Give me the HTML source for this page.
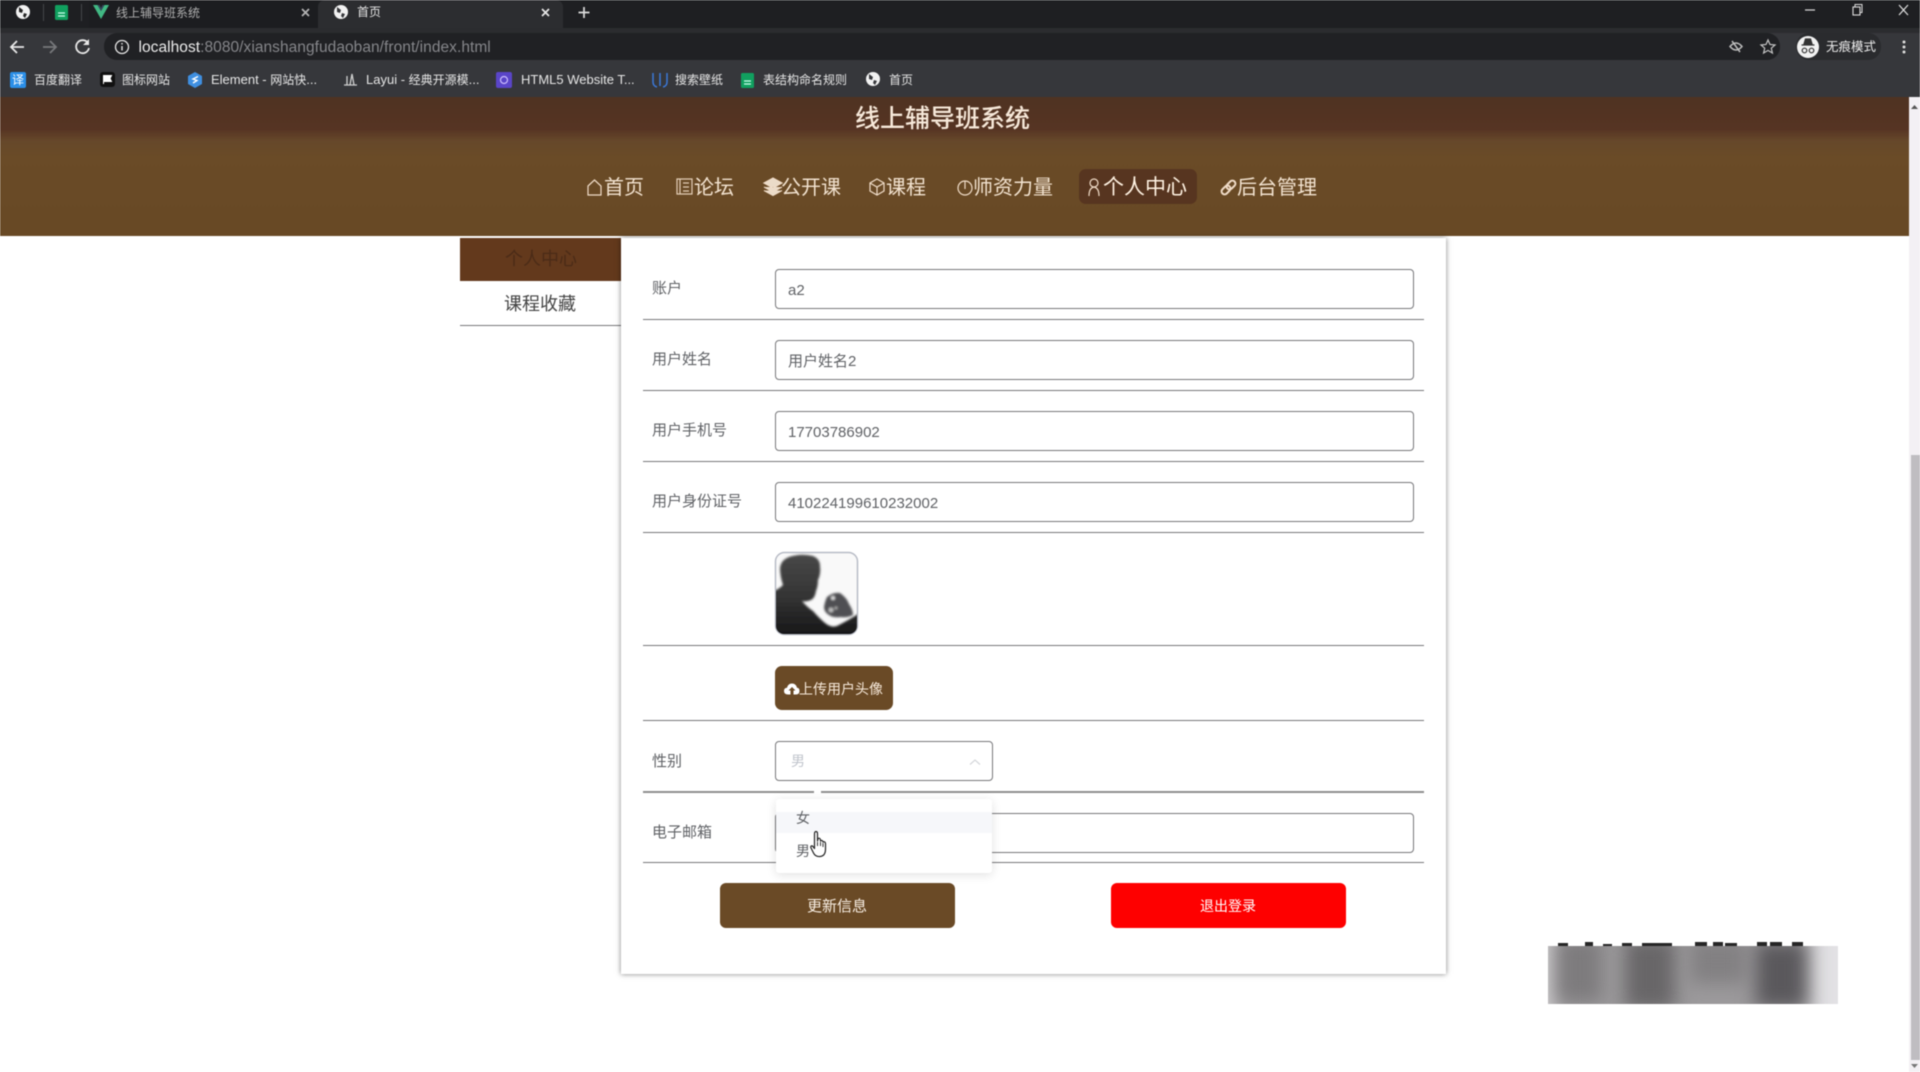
<!DOCTYPE html>
<html lang="zh"><head><meta charset="utf-8"><title>首页</title>
<style>
*{box-sizing:border-box}
html,body{margin:0;padding:0;width:1920px;height:1072px;overflow:hidden;background:#fff;font-family:"Liberation Sans","Noto Sans CJK SC",sans-serif}
#w{position:absolute;left:0;top:0;width:1920px;height:1072px;overflow:hidden;background:#fff;filter:blur(.4px)}
.a{position:absolute}
.t{position:absolute;white-space:nowrap;line-height:1}
.line{position:absolute;left:643px;width:781px;height:1px;background:#77777a}
.lab{position:absolute;left:652px;font-size:15px;line-height:20px;color:#606266;white-space:nowrap}
.inp{position:absolute;left:775px;width:639px;height:40px;border:1px solid #77777a;border-radius:4px;background:#fff;padding-left:12px;font-size:15px;line-height:41px;color:#606266;white-space:nowrap}
.nav{position:absolute;top:177px;font-size:20px;line-height:22px;color:#f3e3d0;white-space:nowrap}
.bm{position:absolute;top:73px;font-size:12px;line-height:14px;color:#e6e6e6;white-space:nowrap}
.bm span{font-size:13px}
svg{position:absolute;overflow:visible}
</style></head><body><div id="w">

<!-- browser chrome -->
<div class="a" style="left:0;top:0;width:1920px;height:29px;background:#1e1f22"></div>
<div class="a" style="left:89px;top:0;width:229px;height:28px;background:#1c1d20"></div>
<div class="a" style="left:318px;top:0;width:245px;height:29px;background:#2c2d30;border-radius:7px 7px 0 0"></div>
<div class="a" style="left:0;top:28px;width:1920px;height:69px;background:#36373b"></div>
<div class="a" style="left:0;top:28px;width:1920px;height:5px;background:#2b2c2f"></div>
<div class="a" style="left:104px;top:33px;width:1676px;height:27px;background:#202124;border-radius:13px"></div>
<div class="a" style="left:1796px;top:33px;width:85px;height:27px;background:#2a2b2e;border-radius:13px"></div>

<svg style="left:0;top:0" width="1920" height="97" viewBox="0 0 1920 97" fill="none">
  <circle cx="23" cy="12" r="7" fill="#f2f2f2"/><path d="M19 7l4 3-1 3-3-1zM24 13l3 1-2 4-2-2z" fill="#222"/>
  <rect x="81" y="4" width="1" height="17" fill="#44464a"/>
  <rect x="43" y="4" width="1" height="17" fill="#44464a"/>
  <rect x="55" y="5" width="13" height="15" rx="1.500" fill="#11a05f"/><path d="M58 13h7M58 16h7" stroke="#cfe" stroke-width="1.200"/>
  <path d="M93 5h4.500l3.500 6 3.500-6h4.500l-8 14z" fill="#41b883"/><path d="M97.500 5h2l1.500 3 1.500-3h2l-3.500 6z" fill="#35495e"/>
  <path d="M302 9l7 7M309 9l-7 7" stroke="#b5b5b5" stroke-width="1.700"/>
  <path d="M542 9l7 7M549 9l-7 7" stroke="#e8e8e8" stroke-width="1.700"/>
  <circle cx="341" cy="12" r="7" fill="#f2f2f2"/><path d="M337 7l4 3-1 3-3-1zM342 13l3 1-2 4-2-2z" fill="#35363a"/>
  <path d="M584 7v11M578.500 12.500h11" stroke="#dcdcdc" stroke-width="1.700"/>
  <path d="M24 47H11M17 41l-6 6 6 6" stroke="#e8e8e8" stroke-width="1.800"/>
  <path d="M43 47h13M50 41l6 6-6 6" stroke="#77787b" stroke-width="1.800"/>
  <path d="M88 43a6.500 6.500 0 1 0 1 5" stroke="#e8e8e8" stroke-width="1.800"/><path d="M89 39v6h-6z" fill="#e8e8e8"/>
  <circle cx="122" cy="47" r="6.500" stroke="#e8e8e8" stroke-width="1.300"/><path d="M122 46v4.500M122 43v1.500" stroke="#e8e8e8" stroke-width="1.400"/>
  <path d="M1730 46.500q6-7 12 0q-6 7-12 0zM1732 41l8 11" stroke="#bdbdbd" stroke-width="1.500"/>
  <path d="M1768 40l2 4.500 5 .5-3.700 3.200 1.100 4.800-4.400-2.600-4.400 2.600 1.100-4.800-3.700-3.200 5-.5z" stroke="#c4c4c4" stroke-width="1.200"/>
  <circle cx="1808" cy="47" r="11" fill="#f2f2f2"/>
  <path d="M1804 44l1.500-5h5l1.500 5zM1801.500 45h13" stroke="#333" stroke-width="1.300" fill="#333"/>
  <circle cx="1804.500" cy="50.500" r="2.300" stroke="#333" stroke-width="1.200"/><circle cx="1811.500" cy="50.500" r="2.300" stroke="#333" stroke-width="1.200"/>
  <circle cx="1904" cy="42" r="1.500" fill="#ddd"/><circle cx="1904" cy="47" r="1.500" fill="#ddd"/><circle cx="1904" cy="52" r="1.500" fill="#ddd"/>
  <path d="M1805 10h10" stroke="#ddd" stroke-width="1.200"/>
  <rect x="1853" y="7" width="7" height="8" stroke="#ddd" stroke-width="1.100"/><path d="M1855 7V4.500h7v8h-2" stroke="#ddd" stroke-width="1"/>
  <path d="M1899 5l9 10M1908 5l-9 10" stroke="#ddd" stroke-width="1.200"/>
  <rect x="10" y="72" width="16" height="16" rx="2" fill="#2b8fe8"/>
  <rect x="100" y="72" width="15" height="15" rx="3" fill="#111"/><path d="M103.500 75v9M103.500 75.500h8l-1.500 3 1.500 3h-8" fill="#fff" stroke="#fff"/>
  <path d="M195 72l7 4v8l-7 4-7-4v-8z" fill="#3f8fe0"/><path d="M198 76.500l-5 2.500 4 1.500-4 2.500" stroke="#fff" stroke-width="1.400"/>
  <path d="M347 76v9h3M352 74l2 11h-4zM344 85h13" stroke="#cfcfcf" stroke-width="1.300"/>
  <rect x="496" y="72" width="16" height="16" rx="2" fill="#5a45c8"/><circle cx="504" cy="80" r="3.500" stroke="#cbbcff" stroke-width="1.200"/>
  <path d="M653 73v9q0 4 4 5M660 73v13M667 73v9q0 4-4 5" stroke="#3b78d8" stroke-width="1.500"/>
  <rect x="741" y="73" width="13" height="15" rx="1.500" fill="#11a05f"/><path d="M744 81h7M744 84h7" stroke="#cfe" stroke-width="1.200"/>
  <circle cx="873" cy="79" r="7" fill="#f2f2f2"/><path d="M869 74l4 3-1 3-3-1zM874 80l3 1-2 4-2-2z" fill="#36373b"/>
</svg>
<div class="t" style="left:12px;top:74px;font-size:12px;line-height:13px;color:#fff">译</div>

<div class="t" style="left:116px;top:6px;font-size:12px;line-height:14px;color:#aeaeae">线上辅导班系统</div>
<div class="t" style="left:357px;top:5px;font-size:12px;line-height:14px;color:#e6e6e6">首页</div>
<div class="t" style="left:138.500px;top:39px;font-size:15.500px;line-height:18px;letter-spacing:.05px;color:#85868a"><span style="color:#ececec">localhost</span>:8080/xianshangfudaoban/front/index.html</div>
<div class="t" style="left:1826px;top:40px;font-size:12.500px;line-height:14px;color:#eee">无痕模式</div>
<div class="bm" style="left:34px">百度翻译</div>
<div class="bm" style="left:122px">图标网站</div>
<div class="bm" style="left:211px"><span>Element - </span>网站快<span>...</span></div>
<div class="bm" style="left:366px"><span>Layui - </span>经典开源模<span>...</span></div>
<div class="bm" style="left:521px"><span>HTML5 Website T...</span></div>
<div class="bm" style="left:675px">搜索壁纸</div>
<div class="bm" style="left:763px">表结构命名规则</div>
<div class="bm" style="left:889px">首页</div>

<!-- header -->
<div class="a" style="left:0;top:97px;width:1909px;height:139px;background:linear-gradient(#4f3322 0,#563423 32px,#66482a 44px,#6a4b27 60px,#684925 100%)"></div>
<div class="t" style="left:855px;top:106px;font-size:25px;line-height:27px;color:#f7e9da;font-weight:500">线上辅导班系统</div>
<div class="a" style="left:1079px;top:169px;width:118px;height:35px;border-radius:7px;background:#573520"></div>

<svg style="left:0;top:0" width="1920" height="240" viewBox="0 0 1920 240" fill="none" stroke="#f0dcc8" stroke-width="1.200">
  <path d="M588 186l6.500-6 6.500 6v9h-13z"/>
  <path d="M677 179h15v15h-15zM680 179v15M683 183h6M683 187h6M683 191h6" stroke="#e3cdb6"/>
  <path d="M764 183l9-5 9 5-9 5zM764 187l9 5 9-5M764 190.500l9 5 9-5" fill="#eadbc8"/>
  <path d="M877 179l7 4v8l-7 4-7-4v-8zM870 183l7 4 7-4M877 187v8"/>
  <circle cx="965" cy="188" r="7"/><path d="M965 181v8"/>
  <circle cx="1094" cy="183" r="4"/><path d="M1089 196q0-8 5-9q5 1 5 9"/>
  <g stroke-width="2" transform="rotate(-45 1228.500 187.500)">
    <rect x="1220" y="184.500" width="10" height="6" rx="3"/><rect x="1227" y="184.500" width="10" height="6" rx="3"/>
  </g>
</svg>

<div class="nav" style="left:604px">首页</div>
<div class="nav" style="left:694px">论坛</div>
<div class="nav" style="left:781px">公开课</div>
<div class="nav" style="left:886px">课程</div>
<div class="nav" style="left:973px">师资力量</div>
<div class="nav" style="left:1103px;font-size:21px;color:#fff2e2">个人中心</div>
<div class="nav" style="left:1237px">后台管理</div>

<!-- sidebar -->
<div class="a" style="left:460px;top:238px;width:161px;height:43px;background:#63391c"></div>
<div class="t" style="left:505px;top:249px;font-size:18px;line-height:20px;color:#4b2b17">个人中心</div>
<div class="t" style="left:504px;top:294px;font-size:18px;line-height:20px;color:#444">课程收藏</div>
<div class="a" style="left:460px;top:325px;width:161px;height:1px;background:#77777a"></div>

<!-- main panel -->
<div class="a" style="left:621px;top:238px;width:825px;height:736px;background:#fff;box-shadow:0 0 5px rgba(0,0,0,.5)"></div>

<div class="line" style="top:319px"></div>
<div class="line" style="top:390px"></div>
<div class="line" style="top:461px"></div>
<div class="line" style="top:531.500px"></div>
<div class="line" style="top:645px"></div>
<div class="line" style="top:720px"></div>
<div class="line" style="top:791px;height:2px;background:#8e8e8e"></div>
<div class="line" style="top:862px"></div>

<div class="lab" style="top:279px">账户</div>
<div class="lab" style="top:350px">用户姓名</div>
<div class="lab" style="top:421px">用户手机号</div>
<div class="lab" style="top:492px">用户身份证号</div>
<div class="lab" style="top:752px">性别</div>
<div class="lab" style="top:823px">电子邮箱</div>

<div class="inp" style="top:268.500px">a2</div>
<div class="inp" style="top:340px">用户姓名2</div>
<div class="inp" style="top:411px">17703786902</div>
<div class="inp" style="top:482px">410224199610232002</div>
<div class="inp" style="top:813px"></div>

<!-- avatar -->
<svg style="left:775px;top:552px" width="83" height="83" viewBox="0 0 83 83">
  <defs><clipPath id="c"><rect x="1" y="1" width="81" height="81" rx="8"/></clipPath>
  <filter id="f"><feGaussianBlur stdDeviation="1"/></filter>
  <linearGradient id="g" x1="0" y1="0" x2="0" y2="1"><stop offset="0" stop-color="#484848"/><stop offset=".5" stop-color="#353535"/><stop offset="1" stop-color="#161617"/></linearGradient></defs>
  <rect x=".5" y=".5" width="82" height="82" rx="9" fill="#f9f9f9" stroke="#b8bcc6" stroke-width="1.500"/>
  <g clip-path="url(#c)"><g filter="url(#f)">
    <path d="M5 16Q6 8 14 5Q26 1 38 4Q45 7 45 14Q46 22 43 28Q43 34 41 39Q40 46 36 48Q31 50 27 49Q32 55 38 59Q44 66 50 71Q56 76 62 74Q70 70 80 64L83 62V84H-1V39Q4 37 8 33Q5 24 5 16Z" fill="url(#g)"/>
    <path d="M52 45Q58 40 65 41Q72 46 74 52Q78 58 78 63Q72 66 66 65Q58 66 54 63Q49 60 49 55Q50 49 52 45Z" fill="#505052"/>
    <circle cx="58" cy="46" r="2" fill="#ddd"/><circle cx="56" cy="58" r="2.500" fill="#bbb"/><circle cx="61" cy="56" r="1.500" fill="#aaa"/>
  </g></g>
</svg>

<!-- upload -->
<div class="a" style="left:775px;top:666px;width:118px;height:44px;background:#6a4a26;border-radius:7px"></div>
<svg style="left:784px;top:682px" width="16" height="14" viewBox="0 0 16 14"><path d="M4 12.500Q0 12.500 0 9Q0 6 3 5.800Q4 1.500 8 1.500Q12 1.500 13 5.800Q15.500 6 15.500 9Q15.500 12.500 12 12.500H9.500V8.500H11.500L8 5 4.500 8.500H6.500V12.500Z" fill="#fff"/></svg>
<div class="t" style="left:799px;top:681px;font-size:14px;line-height:16px;color:#f7e9da">上传用户头像</div>

<!-- select -->
<div class="a" style="left:775px;top:741px;width:218px;height:40px;border:1px solid #77777a;border-radius:4px;background:#fff"></div>
<div class="t" style="left:791px;top:753px;font-size:14px;line-height:16px;color:#c0c4cc">男</div>
<svg style="left:969px;top:758px" width="12" height="8" viewBox="0 0 12 8" fill="none"><path d="M1 6.500L6 2l5 4.500" stroke="#d4d6da" stroke-width="1.200"/></svg>

<!-- dropdown -->
<div class="a" style="left:814px;top:790px;width:7px;height:6px;background:#fff"></div>
<div class="a" style="left:776px;top:799px;width:216px;height:74px;background:#fff;border-radius:3px;box-shadow:0 2px 10px rgba(0,0,0,.12)"></div>
<div class="a" style="left:776px;top:812px;width:216px;height:21px;background:#f6f7fa"></div>
<div class="t" style="left:796px;top:810px;font-size:14px;line-height:16px;color:#606266">女</div>
<div class="t" style="left:796px;top:843px;font-size:14px;line-height:16px;color:#606266">男</div>
<svg style="left:810px;top:830px" width="20" height="28" viewBox="0 0 20 28">
  <path d="M4.500 4Q4.500 1.500 6 1.500Q7.500 1.500 7.500 4V11L8 8.500Q10 7.500 10.500 10V11Q12.500 9.500 13 12Q15 11 15.500 13.500V19Q15.500 26 10 26.500Q5.500 27 3.500 23L.8 17.500Q.5 15.500 2.500 16L4.500 18.500Z" fill="#fff" stroke="#222" stroke-width="1.200" stroke-linejoin="round"/>
  <path d="M7.500 12v4M10.500 12v4M13 13v4" stroke="#222" stroke-width=".9"/>
</svg>

<!-- buttons -->
<div class="a" style="left:720px;top:883px;width:235px;height:45px;background:#6a4a26;border-radius:6px"></div>
<div class="t" style="left:807px;top:898px;font-size:15px;line-height:17px;color:#f9efe4">更新信息</div>
<div class="a" style="left:1111px;top:883px;width:235px;height:45px;background:#fe0000;border-radius:6px"></div>
<div class="t" style="left:1200px;top:898px;font-size:14px;line-height:16px;color:#fff">退出登录</div>

<!-- watermark glyph fragments above blurred block -->
<svg style="left:1548px;top:940px" width="290" height="6" viewBox="0 0 290 6" fill="#262626">
  <rect x="10" y="3" width="10" height="3"/><rect x="37" y="2" width="8" height="4"/><rect x="55" y="4" width="9" height="2"/><rect x="74" y="3" width="10" height="3"/><rect x="94" y="3" width="30" height="3"/><rect x="147" y="2" width="12" height="4"/><rect x="165" y="2" width="10" height="4"/><rect x="177" y="3" width="12" height="3"/><rect x="209" y="2" width="10" height="4"/><rect x="222" y="2" width="12" height="4"/><rect x="244" y="2" width="11" height="4"/>
</svg>

<!-- blurred watermark -->
<div class="a" style="left:1548px;top:946px;width:290px;height:58px;overflow:hidden;background:#e6e5e8">
  <div class="a" style="left:-20px;top:-20px;width:330px;height:98px;filter:blur(7px);background:linear-gradient(90deg,#c8c6c8 0,#c8c6c8 24px,#9c9a9c 34px,#9c9a9c 268px,#dedde0 292px,#e8e7ea 100%)"></div>
  <div class="a" style="left:10px;top:-8px;width:44px;height:64px;background:#7d7b7d;filter:blur(9px)"></div>
  <div class="a" style="left:77px;top:-8px;width:50px;height:72px;background:#686668;filter:blur(9px)"></div>
  <div class="a" style="left:142px;top:-8px;width:56px;height:46px;background:#828082;filter:blur(9px)"></div>
  <div class="a" style="left:208px;top:-4px;width:50px;height:66px;background:#5a585c;filter:blur(9px)"></div>
</div>

<!-- scrollbar -->
<div class="a" style="left:1909px;top:97px;width:11px;height:975px;background:#f3f0f4"></div>
<div class="a" style="left:1911px;top:455px;width:9px;height:605px;background:#bfbdc1"></div>
<svg style="left:1909px;top:0" width="11" height="1072" viewBox="0 0 11 1072"><path d="M2 109l3.500-4 3.500 4z" fill="#555"/><path d="M2 1064l3.500 4 3.500-4z" fill="#777"/></svg>

</div></body></html>
